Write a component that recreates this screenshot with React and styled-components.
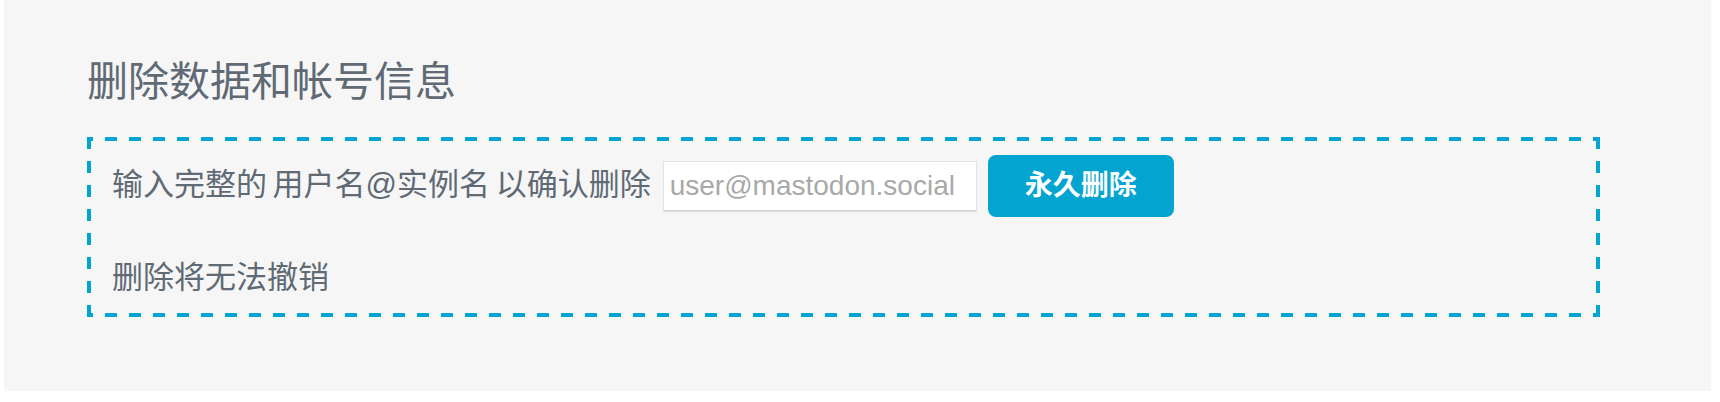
import React from "react";
import styled, { createGlobalStyle } from "styled-components";

const GlobalStyle = createGlobalStyle`
  html, body {
    margin: 0;
    padding: 0;
    background: #ffffff;
  }
  body {
    font-family: "Liberation Sans", "Noto Sans CJK SC", sans-serif;
  }
`;

const ACCENT = "#03a5d0";

const Panel = styled.section`
  box-sizing: border-box;
  width: 1707px;
  height: 391px;
  margin-left: 4px;
  padding: 62px 0 0 83px;
  background: #f6f6f6;
`;

const Title = styled.h1`
  margin: 0 0 34px;
  font-family: "Liberation Sans", "Noto Sans CJK SC", sans-serif;
  font-size: 41px;
  line-height: 41px;
  font-weight: 400;
  color: #5f6a75;
`;

/* 4px dashed frame with 12px dashes and 12px gaps */
const DangerBox = styled.div`
  box-sizing: border-box;
  width: 1513px;
  height: 180px;
  padding: 18px 24px 0 25px;
  background-image:
    linear-gradient(90deg, ${ACCENT} 12px, transparent 12px),
    linear-gradient(90deg, ${ACCENT} 12px, transparent 12px),
    linear-gradient(180deg, ${ACCENT} 12px, transparent 12px),
    linear-gradient(180deg, ${ACCENT} 12px, transparent 12px);
  background-size: 24px 4px, 24px 4px, 4px 24px, 4px 24px;
  background-repeat: repeat-x, repeat-x, repeat-y, repeat-y;
  background-position: -6px 0, -6px 100%, 0 0, 100% 0;
`;

const ConfirmRow = styled.div`
  display: flex;
  align-items: baseline;
  gap: 9px;
`;

const Text = styled.span`
  margin-right: 3px;
  font-size: 31px;
  line-height: 1;
  word-spacing: -3px;
  color: #5f6a75;
`;

const Input = styled.input`
  box-sizing: border-box;
  width: 314px;
  height: 50px;
  padding: 0 6px;
  border: 1px solid #e4e4e4;
  border-bottom-color: #d0d0d0;
  box-shadow: 0 1px 1px rgba(0, 0, 0, 0.08);
  background: #ffffff;
  font-family: "Liberation Sans", sans-serif;
  font-size: 28px;
  color: #333;
  outline: none;
  &::placeholder {
    color: #a9a9a9;
  }
`;

const DangerButton = styled.button`
  box-sizing: border-box;
  height: 62px;
  margin-left: 2px;
  padding: 0 37px;
  border: 0;
  border-radius: 8px;
  background: ${ACCENT};
  color: #ffffff;
  font-family: "Liberation Sans", "Noto Sans CJK SC", sans-serif;
  font-size: 28px;
  font-weight: 700;
  line-height: 1;
  cursor: pointer;
`;

const Note = styled.p`
  margin: 45px 0 0;
  font-size: 31px;
  line-height: 1;
  color: #5f6a75;
`;

export default function App() {
  return (
    <>
      <GlobalStyle />
      <Panel>
        <Title>删除数据和帐号信息</Title>
        <DangerBox>
          <ConfirmRow>
            <Text>输入完整的 用户名@实例名 以确认删除</Text>
            <Input type="text" placeholder="user@mastodon.social" />
            <DangerButton type="button">永久删除</DangerButton>
          </ConfirmRow>
          <Note>删除将无法撤销</Note>
        </DangerBox>
      </Panel>
    </>
  );
}
